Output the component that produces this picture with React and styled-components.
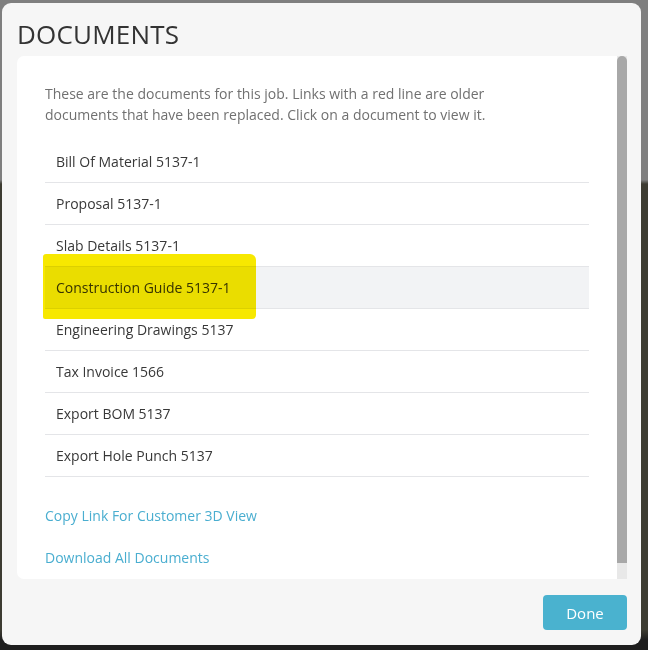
import React from "react";
import styled, { createGlobalStyle } from "styled-components";

const documents = [
  { name: "Bill Of Material 5137-1" },
  { name: "Proposal 5137-1" },
  { name: "Slab Details 5137-1" },
  { name: "Construction Guide 5137-1", active: true, marked: true },
  { name: "Engineering Drawings 5137" },
  { name: "Tax Invoice 1566" },
  { name: "Export BOM 5137" },
  { name: "Export Hole Punch 5137" },
];

function App() {
  return (
    <>
      <GlobalStyle />
      <Backdrop>
        <Modal>
          <Title>DOCUMENTS</Title>
          <Body>
            <Panel>
              <Intro>
                These are the documents for this job. Links with a red line are older
                documents that have been replaced. Click on a document to view it.
              </Intro>
              <DocList>
                {documents.map((doc) => (
                  <DocRow key={doc.name} active={doc.active}>
                    {doc.name}
                    {doc.marked && <Marker />}
                  </DocRow>
                ))}
              </DocList>
              <Actions>
                <ActionLink>Copy Link For Customer 3D View</ActionLink>
                <ActionLink>Download All Documents</ActionLink>
              </Actions>
            </Panel>
            <ScrollTrack>
              <ScrollThumb />
            </ScrollTrack>
          </Body>
          <Footer>
            <DoneButton>Done</DoneButton>
          </Footer>
        </Modal>
      </Backdrop>
    </>
  );
}

export default App;

const GlobalStyle = createGlobalStyle`
  html, body {
    margin: 0;
    padding: 0;
  }
  body {
    background: linear-gradient(
      180deg,
      #7f7f7f 0px,
      #7f7f7f 180px,
      #3d3c32 184px,
      #3d3c32 630px,
      #1e1e1e 640px
    );
    font-family: "Open Sans", "Liberation Sans", sans-serif;
  }
`;

const Backdrop = styled.div`
  width: 648px;
  height: 650px;
  padding: 3px 7px 5px 2px;
  box-sizing: border-box;
`;

const Modal = styled.div`
  height: 100%;
  background: #f6f6f6;
  border-radius: 9px;
  padding: 0 14px 0 15px;
  box-sizing: border-box;
  display: flex;
  flex-direction: column;
`;

const Title = styled.h1`
  margin: 0;
  height: 53px;
  padding-top: 14px;
  box-sizing: border-box;
  font-size: 26px;
  line-height: 34px;
  font-weight: 400;
  color: #333333;
  letter-spacing: 0.2px;
`;

const Body = styled.div`
  display: flex;
  height: 523px;
`;

const Panel = styled.div`
  flex: 1;
  background: #ffffff;
  border-radius: 7px 0 0 7px;
  padding: 27px 28px 0 28px;
  box-sizing: border-box;
`;

const Intro = styled.p`
  margin: 0 0 16px;
  max-width: 475px;
  font-size: 14px;
  line-height: 21px;
  color: #707070;
`;

const DocList = styled.div`
  display: flex;
  flex-direction: column;
`;

const DocRow = styled.div`
  position: relative;
  height: 42px;
  display: flex;
  align-items: center;
  padding-left: 11px;
  border-bottom: 1px solid #e4e5e8;
  box-sizing: border-box;
  font-size: 14px;
  color: #383838;
  background: ${(p) => (p.active ? "#f2f3f5" : "transparent")};
  cursor: pointer;
`;

const Marker = styled.span`
  position: absolute;
  left: -2px;
  top: -13px;
  width: 213px;
  height: 65px;
  background: #f7e800;
  mix-blend-mode: multiply;
  border-radius: 3px 6px 4px 2px;
`;

const Actions = styled.div`
  margin-top: 17px;
  display: flex;
  flex-direction: column;
`;

const ActionLink = styled.a`
  height: 42px;
  display: flex;
  align-items: center;
  font-size: 14px;
  color: #4aaed0;
  cursor: pointer;
`;

const ScrollTrack = styled.div`
  width: 10px;
  background: #e8e8e8;
  display: flex;
  flex-direction: column;
`;

const ScrollThumb = styled.div`
  height: 507px;
  background: #a8a8a8;
  border-radius: 5px 5px 0 0;
`;

const Footer = styled.div`
  display: flex;
  justify-content: flex-end;
  padding-top: 16px;
`;

const DoneButton = styled.button`
  width: 84px;
  height: 35px;
  border: none;
  border-radius: 4px;
  background: #4ab2cf;
  color: #ffffff;
  font-family: "Open Sans", "Liberation Sans", sans-serif;
  font-size: 15px;
  font-weight: 500;
  cursor: pointer;
`;
